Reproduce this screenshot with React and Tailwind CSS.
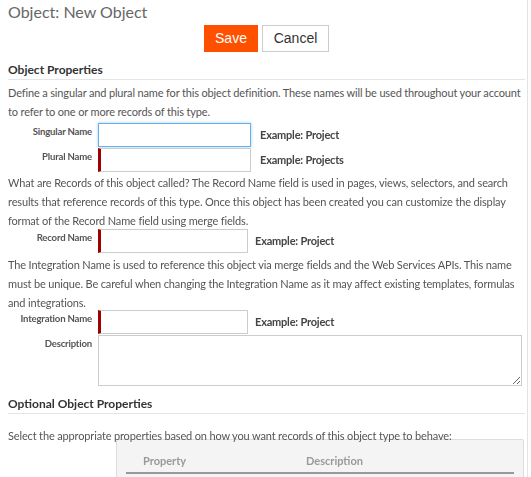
import React from 'react';

const font = { fontFamily: 'Lato, "Open Sans", sans-serif' };
const body = 'text-[11px] tracking-[-0.15px] leading-[19px] text-[#555]';
const labelCls = 'w-[84px] shrink-0 pt-[3px] text-right text-[9.6px] font-bold leading-[12px] tracking-[-0.2px] text-[#555]';

function Field({ label, example, required, focused, inputW = 'w-[153px]', exampleGap = 'ml-[9px]' }) {
  return (
    <div className="flex items-start">
      <label className={labelCls}>{label}</label>
      <div className="ml-[6px] flex items-center">
        <input
          type="text"
          autoFocus={focused}
          className={`h-[24px] ${inputW} border bg-white px-2 text-[12px] caret-black outline-none ${
            focused
              ? 'border-[#66afe9] shadow-[0_0_3px_rgba(102,175,233,0.6)]'
              : 'border-[#ccc]'
          } ${required ? 'border-l-[3px] border-l-[#a00000]' : ''}`}
        />
        {example && (
          <span className={`${exampleGap} text-[11px] font-bold tracking-[-0.2px] text-[#444]`}>{example}</span>
        )}
      </div>
    </div>
  );
}

function SectionTitle({ children }) {
  return (
    <div className="border-b border-[#e5e5e5] pb-[2px] text-[12px] font-bold leading-[15px] text-[#333]">
      {children}
    </div>
  );
}

export default function App() {
  return (
    <div className="h-[477px] w-[528px] overflow-hidden border-r border-[#e3e3e3] bg-white" style={font}>
      <div className="pl-[8px] pr-[2px]">
        <h1 className="pt-[1px] text-[16px] leading-[22px] text-[#666]">Object: New Object</h1>

        <div className="mt-[2px] flex justify-center gap-[4px]" style={{ fontFamily: '"Liberation Sans", Arial, sans-serif' }}>
          <button className="h-[27px] w-[54px] bg-[#ff5000] text-[14px] text-white">Save</button>
          <button className="h-[27px] w-[67px] border border-[#ccc] bg-white text-[14px] text-[#333]">Cancel</button>
        </div>

        <div className="mt-[10px]">
          <SectionTitle>Object Properties</SectionTitle>
        </div>

        <p className={`mt-[3px] ${body}`}>
          Define a singular and plural name for this object definition. These names will be used throughout your account
          to refer to one or more records of this type.
        </p>

        <div className="mt-[2px] flex flex-col gap-[1px]">
          <Field label="Singular Name" example="Example: Project" focused />
          <Field label="Plural Name" example="Example: Projects" required />
        </div>

        <p className={`mt-[1px] ${body}`}>
          What are Records of this object called? The Record Name field is used in pages, views, selectors, and search
          results that reference records of this type. Once this object has been created you can customize the display
          format of the Record Name field using merge fields.
        </p>

        <div className="mt-[-1px]">
          <Field label="Record Name" example="Example: Project" required inputW="w-[150px]" exampleGap="ml-[7px]" />
        </div>

        <p className={`mt-[2px] ${body}`}>
          The Integration Name is used to reference this object via merge fields and the Web Services APIs. This name
          must be unique. Be careful when changing the Integration Name as it may affect existing templates, formulas
          and integrations.
        </p>

        <div className="mt-[-2px] flex flex-col gap-[1px]">
          <Field label="Integration Name" example="Example: Project" required inputW="w-[150px]" exampleGap="ml-[7px]" />
          <div className="flex items-start">
            <label className={labelCls}>Description</label>
            <textarea className="ml-[6px] h-[51px] w-[424px] resize-y border border-[#ccc] bg-white px-2 text-[12px] outline-none" />
          </div>
        </div>

        <div className="mt-[10px]">
          <SectionTitle>Optional Object Properties</SectionTitle>
        </div>

        <p className="mt-[16px] text-[11px] leading-[12px] tracking-[-0.15px] text-[#555]">
          Select the appropriate properties based on how you want records of this object type to behave:
        </p>

        <div className="ml-[108px] mr-[1px] mt-[-3px] rounded-[2px] border border-[#ddd] bg-[#f4f4f4] px-[9px] pt-[14px]">
          <div className="flex border-b-2 border-[#999] pb-[4px] text-[11px] font-bold leading-[14px] text-[#999]">
            <span className="w-[180px] pl-[17px]">Property</span>
            <span>Description</span>
          </div>
          <div className="h-[40px]" />
        </div>
      </div>
    </div>
  );
}
